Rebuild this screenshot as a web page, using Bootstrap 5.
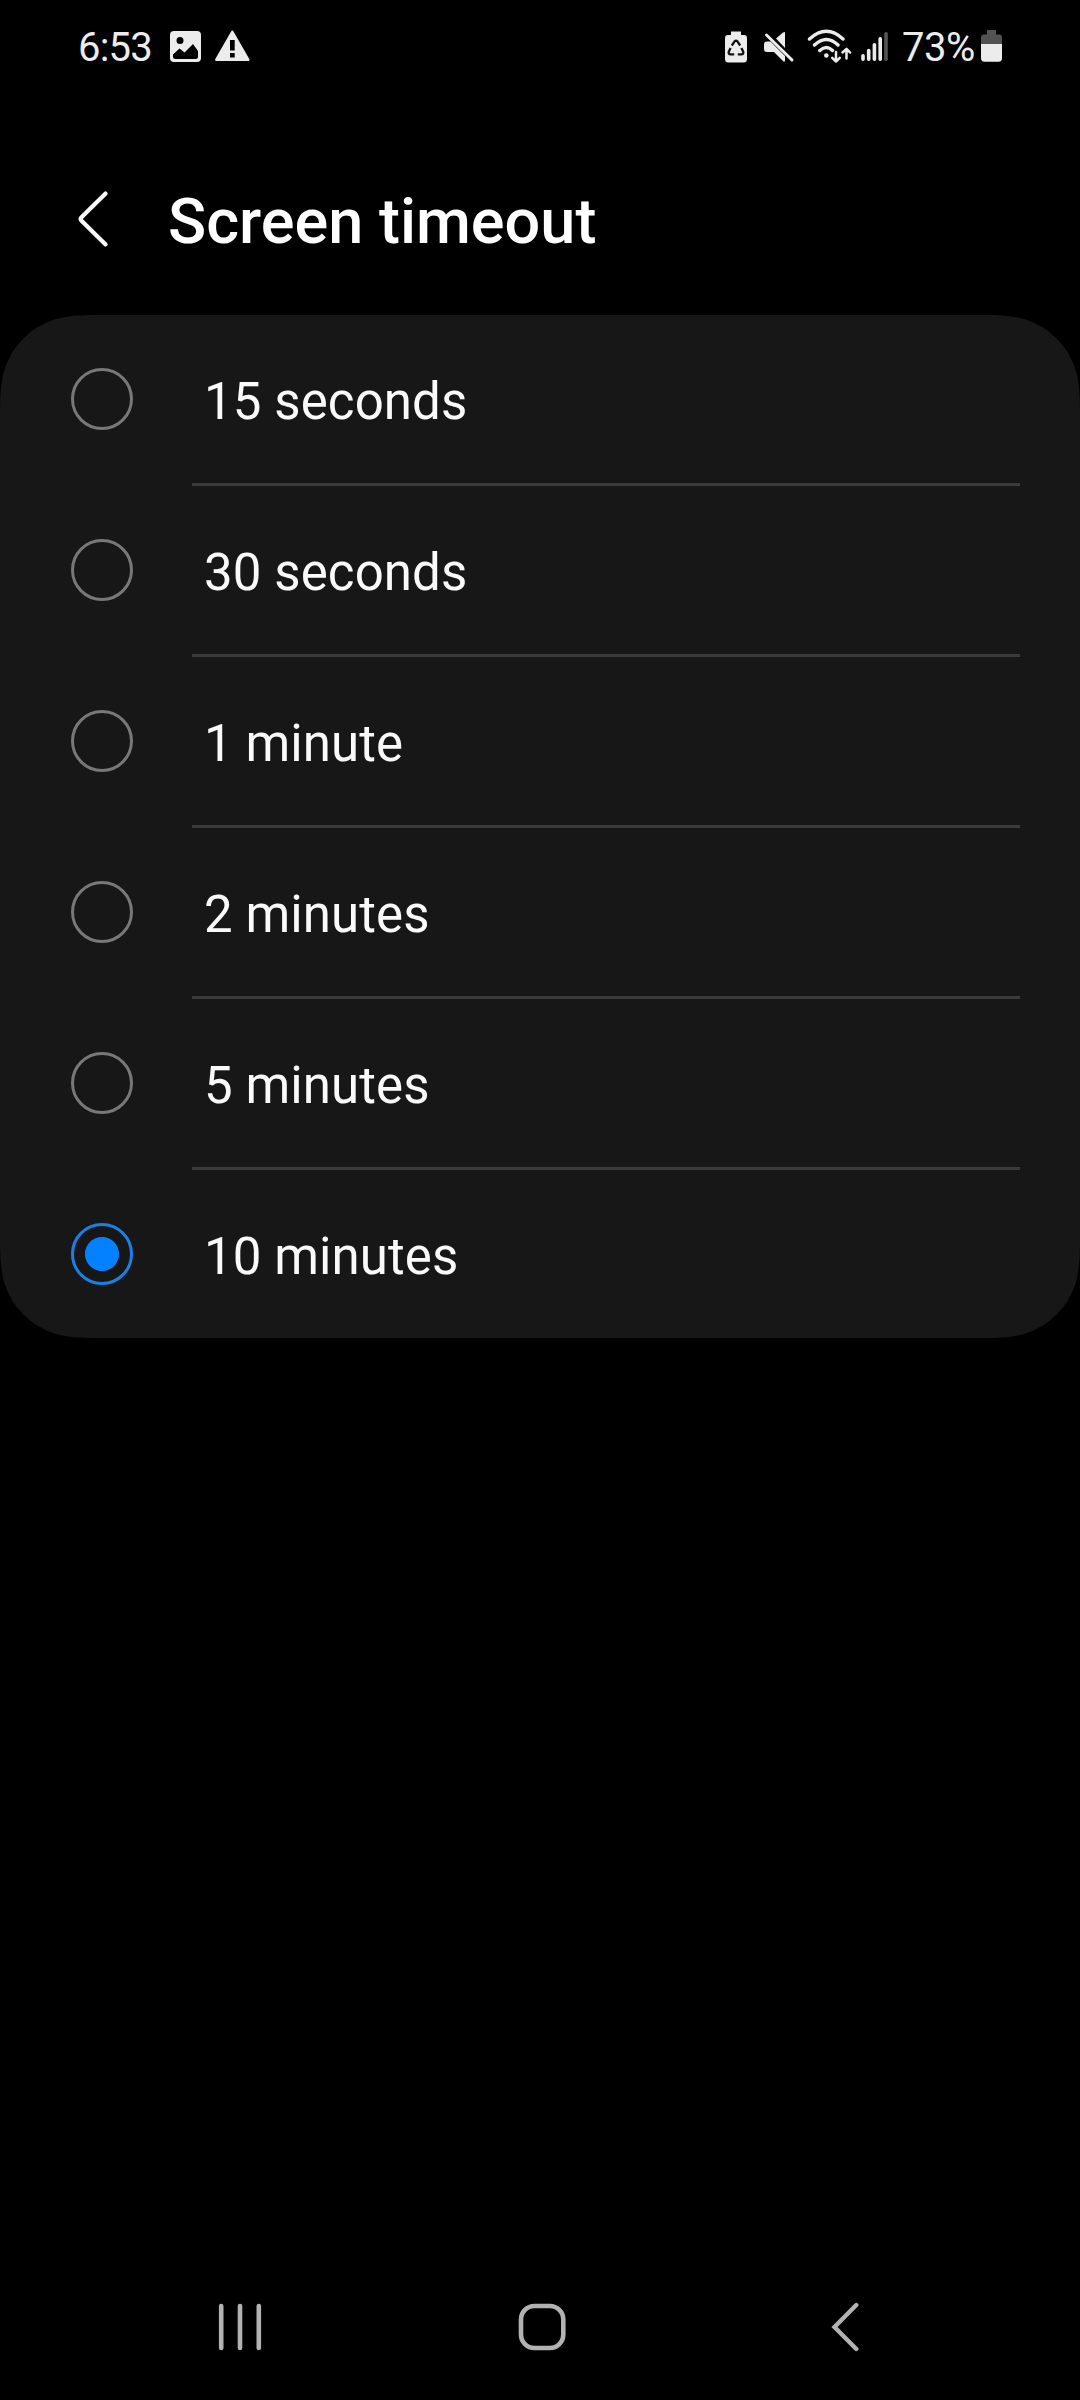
<!DOCTYPE html>
<html lang="en" data-bs-theme="dark">
<head>
<meta charset="utf-8">
<meta name="viewport" content="width=device-width, initial-scale=1">
<title>Screen timeout</title>
<link href="https://cdn.jsdelivr.net/npm/bootstrap@5.3.0/dist/css/bootstrap.min.css" rel="stylesheet">
<style>
body { background:#000; color:#fafafa; font-family:Roboto,"Noto Sans",sans-serif; }
.phone { width:1080px; height:2400px; }
.status { height:94px; padding-left:78px; padding-right:78px; color:#ececec; font-size:40px; line-height:40px; }
.status svg, .titlebar svg, .softkeys svg { display:block; flex:none; }
.clock { width:92px; letter-spacing:-.8px; padding-top:1px; }
.gap-warn { margin-left:14px; }
.percent { width:79px; margin-left:12px; letter-spacing:-.5px; padding-top:1px; }
.titlebar { height:221px; padding:90px 0 0 76px; }
.titlebar svg { margin-top:6px; }
.titlebar h1 { font-size:63px; line-height:74px; font-weight:500; margin-left:58px; padding-top:1px; }
.options { background:#171717; height:1023px; border-radius:0;
  clip-path:path("M0 100C0 80 .8 68 4 56A77.2 77.2 0 0 1 56 4C68 .8 80 0 100 0H980C1000 0 1012 .8 1024 4A77.2 77.2 0 0 1 1076 56C1079.2 68 1080 80 1080 100V923C1080 943 1079.2 955 1076 967A77.2 77.2 0 0 1 1024 1019C1012 1022.2 1000 1023 980 1023H100C80 1023 68 1022.2 56 1019A77.2 77.2 0 0 1 4 967C.8 955 0 943 0 923Z"); }
.option { height:171px; padding:0 60px 0 71px; background:transparent; color:inherit; }
.option:last-child { height:168px; }
.option .form-check-input { width:62px; height:62px; margin:53px 59px 0 0; border:3px solid #787878; background-color:transparent; background-image:none; flex:none; }
.option .form-check-input:checked { border-color:#1a80e6; background-image:radial-gradient(circle,#0381fe 16.6px,transparent 17.4px); background-size:auto; }
.option-label { border-bottom:3px solid #3b3b3b; padding-left:12px; font-size:51px; line-height:60px; padding-top:5px; letter-spacing:.1px; }
.option:last-child .option-label { border-bottom:0; }
.softkeys { height:146px; padding:0 219px 0 217px; }
.recents { margin-right:254px; }
</style>
<script src="https://cdn.jsdelivr.net/npm/bootstrap@5.3.0/dist/js/bootstrap.bundle.min.js"></script>
</head>
<body>
<div class="phone d-flex flex-column overflow-hidden">
  <header class="status d-flex align-items-center justify-content-between">
    <div class="d-flex align-items-center">
      <span class="clock">6:53</span>
      <svg width="31" height="40" viewBox="170 27 31 40"><path fill="#ececec" fill-rule="evenodd" d="M174 31H197Q201 31 201 35V58Q201 62 197 62H174Q170 62 170 58V35Q170 31 174 31ZM180 37A3.5 3.5 0 1 0 180 44A3.5 3.5 0 1 0 180 37ZM173 54.5V56.5Q173 59 175.500 59H195.500Q198 59 198 56.500V51L193 44L184.500 52.500L179.500 48.500Z"/></svg>
      <svg class="gap-warn" width="35" height="40" viewBox="215 27 35 40"><path fill="#ececec" fill-rule="evenodd" d="M232.300 30.500Q233 30.500 233.500 31.500L249.300 59Q250 61 248 61H216.500Q214.500 61 215.300 59L231.100 31.500Q231.600 30.500 232.300 30.500ZM230 40V50.500H234.700V40ZM230 53V57.500H234.700V53Z"/></svg>
    </div>
    <div class="d-flex align-items-center">
      <svg width="165" height="40" viewBox="725 27 165 40" fill="none" stroke-linecap="round">
        <path fill="#ececec" d="M731 31.500H741V35H744Q747 35 747 38V59Q747 62.500 743.500 62.500H728.500Q725 62.500 725 59V38Q725 35 728 35H731Z"/>
        <path stroke="#101010" stroke-width="2.300" stroke-linecap="butt" d="M731.800 45.500L734.600 41.400Q736 40 737.400 41.400L740.200 45.500M741.400 48L743.200 51.700Q743.800 54.300 741.500 54.300H737.800M734.200 54.300H730.500Q728.200 54.300 728.800 51.700L730.600 48"/>
        <path fill="#ececec" d="M785 32V48L776 38.500L783 32.500ZM767 41.500H770.500L785 56V61.500H783.500L774 52H767Q764 52 764 49V44.500Q764 41.500 767 41.500Z"/>
        <path stroke="#ececec" stroke-width="3" d="M766.500 35L792 60"/>
        <g stroke="#ececec" stroke-width="3.400"><path d="M809.500 39Q826.500 23.500 843 39M814.500 45Q826.500 34 838 45M819.800 50.500Q826.500 44.500 832.500 50.500"/></g>
        <circle cx="826.300" cy="55.500" r="2.300" fill="#ececec"/>
        <path stroke="#ececec" stroke-width="2.500" stroke-linejoin="round" d="M836 52V61.500M832.200 57.800L836 61.500L839.800 57.800M846.500 58.500V49M842.500 52.500L846.500 48.800L850 52.500"/>
        <g stroke="#ececec" stroke-width="3.600"><path d="M863 55.800V59.200M868.700 50.500V59.200M874.400 44.700V59.200M880.200 38.800V59.200"/><path stroke="#555" d="M886 33.800V59.200"/></g>
      </svg>
      <span class="percent">73%</span>
      <svg width="21" height="40" viewBox="981 27 21 40"><path fill="#525252" d="M987 30H996V34.500H999Q1002 34.500 1002 37.500V44H981V37.500Q981 34.500 984 34.500H987Z"/><path fill="#ececec" d="M981 44H1002V58Q1002 61.800 998.500 61.800H984.500Q981 61.800 981 58Z"/></svg>
    </div>
  </header>

  <div class="titlebar d-flex align-items-start">
    <svg width="34" height="58" viewBox="76 190 34 58"><path d="M105.600 193.600L81.500 217.300Q79.800 219 81.500 220.700L105.600 244.400" fill="none" stroke="#fafafa" stroke-width="4.200" stroke-linecap="round"/></svg>
    <h1 class="mb-0">Screen timeout</h1>
  </div>

  <main class="options list-group list-group-flush">
    <label class="option d-flex"><input class="form-check-input" type="radio" name="timeout"><span class="option-label d-flex align-items-center flex-grow-1">15 seconds</span></label>
    <label class="option d-flex"><input class="form-check-input" type="radio" name="timeout"><span class="option-label d-flex align-items-center flex-grow-1">30 seconds</span></label>
    <label class="option d-flex"><input class="form-check-input" type="radio" name="timeout"><span class="option-label d-flex align-items-center flex-grow-1">1 minute</span></label>
    <label class="option d-flex"><input class="form-check-input" type="radio" name="timeout"><span class="option-label d-flex align-items-center flex-grow-1">2 minutes</span></label>
    <label class="option d-flex"><input class="form-check-input" type="radio" name="timeout"><span class="option-label d-flex align-items-center flex-grow-1">5 minutes</span></label>
    <label class="option d-flex"><input class="form-check-input" type="radio" name="timeout" checked><span class="option-label d-flex align-items-center flex-grow-1">10 minutes</span></label>
  </main>

  <nav class="softkeys d-flex align-items-center mt-auto">
    <svg class="recents" width="46" height="50" viewBox="217 2302 46 50"><path d="M221.200 2306V2348M240 2306V2348M258.800 2306V2348" stroke="#b2b2b2" stroke-width="4.600" stroke-linecap="round"/></svg>
    <svg width="50" height="50" viewBox="517 2302 50 50"><rect x="521" y="2306" width="42.300" height="42" rx="13.500" fill="none" stroke="#b2b2b2" stroke-width="4.600"/></svg>
    <svg class="ms-auto" width="30" height="50" viewBox="831 2302 30 50"><path d="M856.300 2305L834.500 2327L856.300 2349" fill="none" stroke="#b2b2b2" stroke-width="4.400" stroke-linecap="round"/></svg>
  </nav>
</div>
</body>
</html>
